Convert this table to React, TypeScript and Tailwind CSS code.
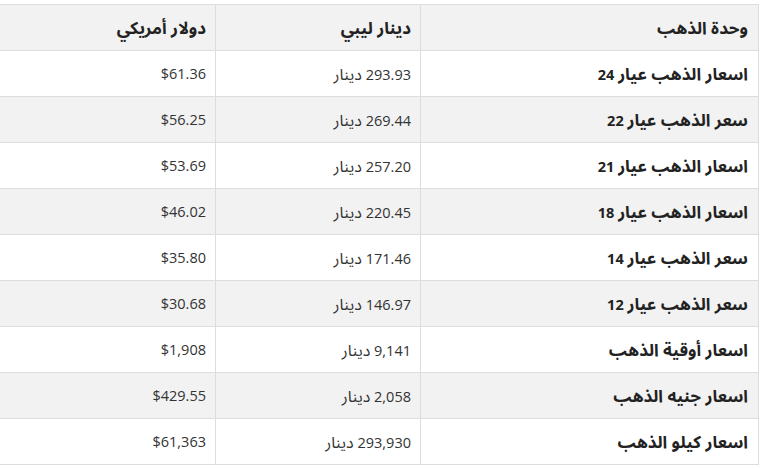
const rows = [
  { unit: "اسعار الذهب عيار", k: "24", lyd: "293.93", usd: "$61.36" },
  { unit: "سعر الذهب عيار", k: "22", lyd: "269.44", usd: "$56.25" },
  { unit: "اسعار الذهب عيار", k: "21", lyd: "257.20", usd: "$53.69" },
  { unit: "اسعار الذهب عيار", k: "18", lyd: "220.45", usd: "$46.02" },
  { unit: "سعر الذهب عيار", k: "14", lyd: "171.46", usd: "$35.80" },
  { unit: "سعر الذهب عيار", k: "12", lyd: "146.97", usd: "$30.68" },
  { unit: "اسعار أوقية الذهب", k: "", lyd: "9,141", usd: "$1,908" },
  { unit: "اسعار جنيه الذهب", k: "", lyd: "2,058", usd: "$429.55" },
  { unit: "اسعار كيلو الذهب", k: "", lyd: "293,930", usd: "$61,363" },
];

export default function App() {
  return (
    <div
      className="bg-white w-[773px] h-[468px] overflow-hidden pt-[4px]"
      style={{ fontFamily: '"Open Sans", "Noto Sans Arabic", "DejaVu Sans", sans-serif' }}
    >
      <table dir="rtl" className="w-[761px] ml-[-2px] border-collapse text-[14.5px] text-[#333]">
        <thead>
          <tr className="bg-[#f2f2f2]">
            <th className="w-[338px] h-[46px] border border-[#dddddd] px-[10px] text-right text-[17px] font-bold text-[#222]">
              وحدة الذهب
            </th>
            <th className="w-[205px] h-[46px] border border-[#dddddd] px-[9px] text-right text-[17px] font-bold text-[#222]">
              دينار ليبي
            </th>
            <th className="h-[46px] border border-[#dddddd] px-[9px] text-right text-[17px] font-bold text-[#222]">
              دولار أمريكي
            </th>
          </tr>
        </thead>
        <tbody>
          {rows.map((r, i) => (
            <tr key={r.unit + r.k} className={i % 2 === 1 ? "bg-[#f2f2f2]" : "bg-white"}>
              <td className="h-[46px] border border-[#dddddd] px-[10px] text-right font-bold text-[#222]">
                <span className="text-[17px]">{r.unit}</span>
                {r.k && " " + r.k}
              </td>
              <td className="h-[46px] border border-[#dddddd] px-[9px] text-right">
                {r.lyd} <span className="text-[16px]">دينار</span>
              </td>
              <td className="h-[46px] border border-[#dddddd] px-[9px] text-right">
                <span dir="ltr">{r.usd}</span>
              </td>
            </tr>
          ))}
        </tbody>
      </table>
    </div>
  );
}
